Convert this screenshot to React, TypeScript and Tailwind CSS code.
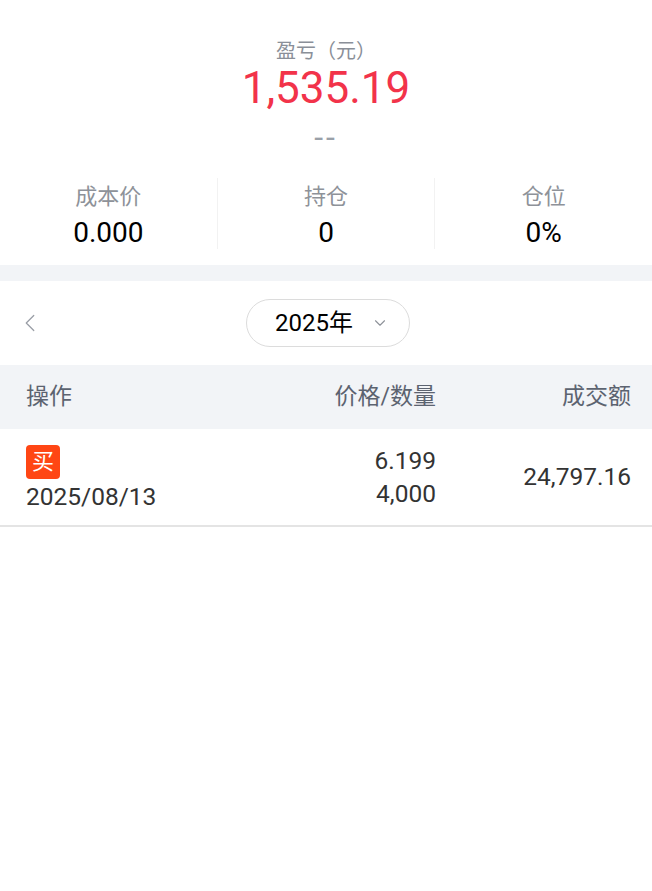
import { ChevronLeft, ChevronDown } from 'lucide-react';

const font = { fontFamily: "Roboto, 'Noto Sans CJK SC', sans-serif" };

const stats = [
  { label: '成本价', value: '0.000' },
  { label: '持仓', value: '0' },
  { label: '仓位', value: '0%' },
];

export default function App() {
  return (
    <div className="min-h-[891px] w-[652px] bg-white" style={font}>
      <div className="flex flex-col items-center pt-[37px]">
        <div className="text-[20px] leading-[28px] text-[#8a8f98]">盈亏（元）</div>
        <div className="-mt-px text-[44px] leading-[48px] text-[#f2334a]">1,535.19</div>
        <div className="mt-[11px] text-[32px] leading-[28px] tracking-[3px] text-[#9aa0a8]">--</div>
      </div>

      <div className="mt-[27px] flex">
        {stats.map((s, i) => (
          <div
            key={s.label}
            className={`flex flex-1 flex-col items-center ${i > 0 ? 'border-l border-[#f2f2f2]' : ''}`}
          >
            <div className="pt-[5px] text-[22px] leading-[28px] text-[#8e9299]">{s.label}</div>
            <div className="mt-[6px] text-[28px] leading-[32px] text-black">{s.value}</div>
          </div>
        ))}
      </div>

      <div className="mt-[16px] h-[16px] bg-[#f2f4f7]" />

      <div className="relative flex h-[84px] items-center justify-center">
        <ChevronLeft className="absolute left-[15px] top-[27px]" size={30} strokeWidth={1} color="#9a9ea6" />
        <div className="ml-[4px] flex h-[48px] w-[164px] items-center justify-center gap-[18px] rounded-full border border-[#dcdcdc] pl-[8px]">
          <span className="text-[24px] leading-[28px] text-black">2025年</span>
          <ChevronDown size={18} strokeWidth={1.5} color="#8e9299" />
        </div>
      </div>

      <div className="flex h-[64px] items-center bg-[#f2f4f7] pl-[26px] pr-[21px] text-[23px] text-[#5c6370]">
        <div className="flex-1">操作</div>
        <div className="w-[200px] text-right">价格/数量</div>
        <div className="w-[195px] text-right">成交额</div>
      </div>

      <div className="flex h-[98px] items-center border-b-2 border-[#e4e4e4] pl-[26px] pr-[21px] text-[24.5px] text-[#333333]">
        <div className="flex flex-1 flex-col">
          <div className="mt-[3px] flex h-[34px] w-[34px] items-center justify-center rounded-[4px] bg-[#ff4614] text-[22px] leading-none text-white">
            买
          </div>
          <div className="mt-[2px] leading-[32px]">2025/08/13</div>
        </div>
        <div className="flex w-[200px] flex-col items-end leading-[33px]">
          <div>6.199</div>
          <div>4,000</div>
        </div>
        <div className="w-[195px] text-right">24,797.16</div>
      </div>
    </div>
  );
}
